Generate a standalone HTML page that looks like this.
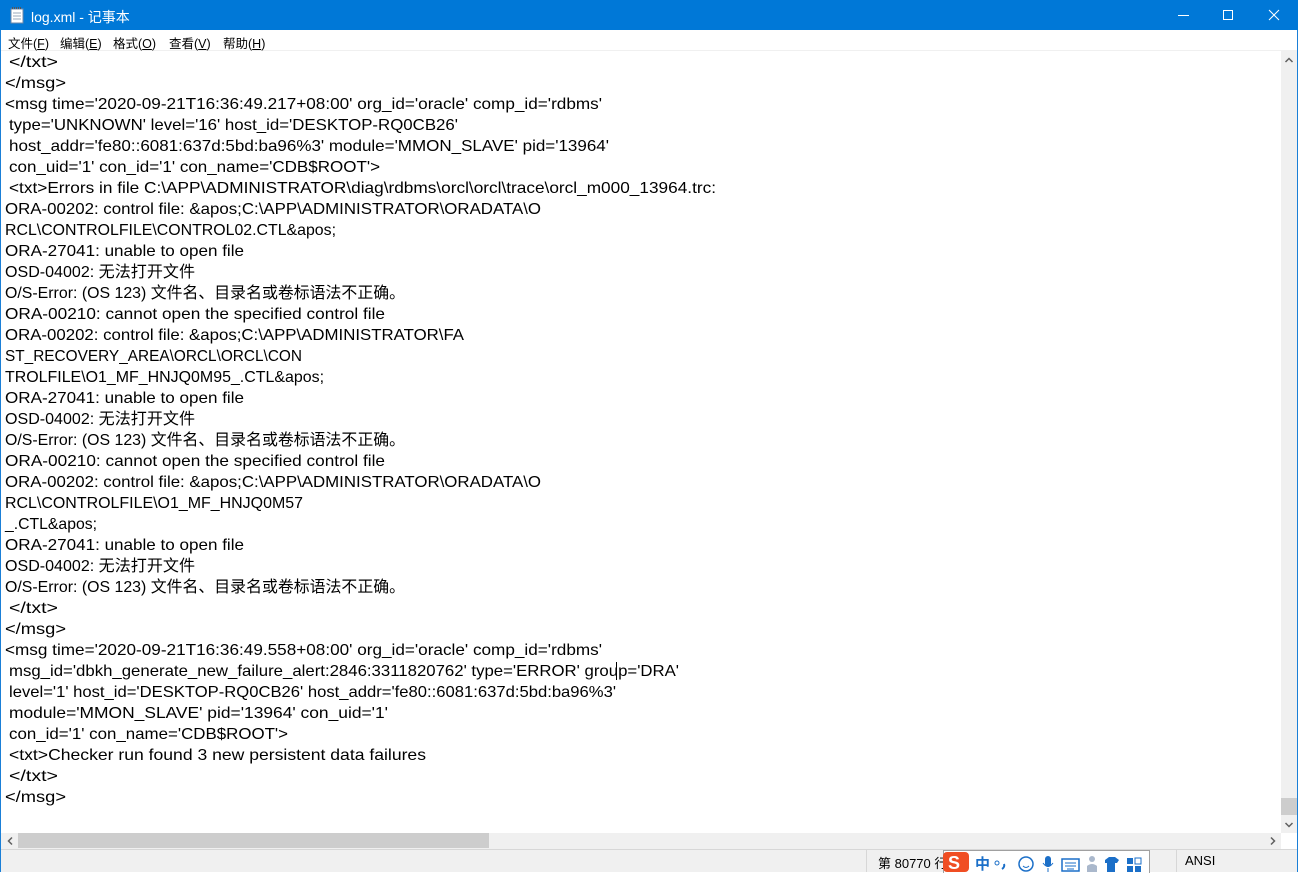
<!DOCTYPE html>
<html><head><meta charset="utf-8"><style>
body{margin:0;width:1298px;height:872px;overflow:hidden;background:#fff;font-family:"Liberation Sans","Noto Sans CJK SC",sans-serif;position:relative}
.frame{position:absolute;left:0;top:0;width:1296px;height:870px;border:1px solid #1a7fd7}
.title{position:absolute;left:0;top:0;width:1298px;height:30px;background:#0078d7;color:#fff;font-size:14px}
.menu{position:absolute;left:1px;top:30px;width:1296px;height:20px;background:#fff;font-size:12.5px;font-family:"Liberation Sans","Noto Sans CJK SC",sans-serif;border-bottom:1px solid #f0f0f0}
.menu span{position:absolute;top:3px}
.vs{position:absolute;left:1281px;top:51px;width:16px;height:782px;background:#f0f0f0}
.hs{position:absolute;left:1px;top:833px;width:1280px;height:16px;background:#f0f0f0}
.status{position:absolute;left:1px;top:849px;width:1296px;height:22px;background:#f0f0f0;border-top:1px solid #d7d7d7;font-size:13px}
</style></head><body>
<div class="frame"></div>
<div class="title">
<svg style="position:absolute;left:10px;top:7px" width="14" height="17"><rect x="1" y="2" width="12" height="14" fill="#fff" stroke="#6b87a8"/><path d="M3 6h8M3 9h8M3 12h8" stroke="#9ab"/><path d="M2 1h10" stroke="#555" stroke-width="2" stroke-dasharray="1 1"/></svg>
<span style="position:absolute;left:31px;top:7px">log.xml - 记事本</span>
<svg style="position:absolute;left:1170px;top:0" width="128" height="30"><path d="M8 15.5h11" stroke="#fff"/><rect x="53.5" y="10.5" width="9" height="9" fill="none" stroke="#fff"/><path d="M99 10l10 10M109 10l-10 10" stroke="#fff"/></svg>
</div>
<div class="menu">
<span style="left:7px">文件(<u>F</u>)</span><span style="left:59px">编辑(<u>E</u>)</span><span style="left:112px">格式(<u>O</u>)</span><span style="left:168px">查看(<u>V</u>)</span><span style="left:222px">帮助(<u>H</u>)</span>
</div>
<svg style="position:absolute;left:0;top:0" width="1280" height="833" font-size="16" font-family="Liberation Sans,Noto Sans CJK SC,sans-serif" fill="#000">
<g>
<text x="9" y="67" textLength="49" lengthAdjust="spacingAndGlyphs">&lt;/txt&gt;</text>
<text x="5" y="88" textLength="61" lengthAdjust="spacingAndGlyphs">&lt;/msg&gt;</text>
<text x="5" y="109" textLength="597" lengthAdjust="spacingAndGlyphs">&lt;msg time='2020-09-21T16:36:49.217+08:00' org_id='oracle' comp_id='rdbms'</text>
<text x="9" y="130" textLength="449" lengthAdjust="spacingAndGlyphs">type='UNKNOWN' level='16' host_id='DESKTOP-RQ0CB26'</text>
<text x="9" y="151" textLength="600" lengthAdjust="spacingAndGlyphs">host_addr='fe80::6081:637d:5bd:ba96%3' module='MMON_SLAVE' pid='13964'</text>
<text x="9" y="172" textLength="371" lengthAdjust="spacingAndGlyphs">con_uid='1' con_id='1' con_name='CDB$ROOT'&gt;</text>
<text x="9" y="193" textLength="707" lengthAdjust="spacingAndGlyphs">&lt;txt&gt;Errors in file C:\APP\ADMINISTRATOR\diag\rdbms\orcl\orcl\trace\orcl_m000_13964.trc:</text>
<text x="5" y="214" textLength="536" lengthAdjust="spacingAndGlyphs">ORA-00202: control file: &amp;apos;C:\APP\ADMINISTRATOR\ORADATA\O</text>
<text x="5" y="235" textLength="331" lengthAdjust="spacingAndGlyphs">RCL\CONTROLFILE\CONTROL02.CTL&amp;apos;</text>
<text x="5" y="256" textLength="239" lengthAdjust="spacingAndGlyphs">ORA-27041: unable to open file</text>
<text x="5" y="277" textLength="190" lengthAdjust="spacingAndGlyphs">OSD-04002: 无法打开文件</text>
<text x="5" y="298" textLength="400" lengthAdjust="spacingAndGlyphs">O/S-Error: (OS 123) 文件名、目录名或卷标语法不正确。</text>
<text x="5" y="319" textLength="380" lengthAdjust="spacingAndGlyphs">ORA-00210: cannot open the specified control file</text>
<text x="5" y="340" textLength="459" lengthAdjust="spacingAndGlyphs">ORA-00202: control file: &amp;apos;C:\APP\ADMINISTRATOR\FA</text>
<text x="5" y="361" textLength="297" lengthAdjust="spacingAndGlyphs">ST_RECOVERY_AREA\ORCL\ORCL\CON</text>
<text x="5" y="382" textLength="319" lengthAdjust="spacingAndGlyphs">TROLFILE\O1_MF_HNJQ0M95_.CTL&amp;apos;</text>
<text x="5" y="403" textLength="239" lengthAdjust="spacingAndGlyphs">ORA-27041: unable to open file</text>
<text x="5" y="424" textLength="190" lengthAdjust="spacingAndGlyphs">OSD-04002: 无法打开文件</text>
<text x="5" y="445" textLength="400" lengthAdjust="spacingAndGlyphs">O/S-Error: (OS 123) 文件名、目录名或卷标语法不正确。</text>
<text x="5" y="466" textLength="380" lengthAdjust="spacingAndGlyphs">ORA-00210: cannot open the specified control file</text>
<text x="5" y="487" textLength="536" lengthAdjust="spacingAndGlyphs">ORA-00202: control file: &amp;apos;C:\APP\ADMINISTRATOR\ORADATA\O</text>
<text x="5" y="508" textLength="298" lengthAdjust="spacingAndGlyphs">RCL\CONTROLFILE\O1_MF_HNJQ0M57</text>
<text x="5" y="529" textLength="92" lengthAdjust="spacingAndGlyphs">_.CTL&amp;apos;</text>
<text x="5" y="550" textLength="239" lengthAdjust="spacingAndGlyphs">ORA-27041: unable to open file</text>
<text x="5" y="571" textLength="190" lengthAdjust="spacingAndGlyphs">OSD-04002: 无法打开文件</text>
<text x="5" y="592" textLength="400" lengthAdjust="spacingAndGlyphs">O/S-Error: (OS 123) 文件名、目录名或卷标语法不正确。</text>
<text x="9" y="613" textLength="49" lengthAdjust="spacingAndGlyphs">&lt;/txt&gt;</text>
<text x="5" y="634" textLength="61" lengthAdjust="spacingAndGlyphs">&lt;/msg&gt;</text>
<text x="5" y="655" textLength="597" lengthAdjust="spacingAndGlyphs">&lt;msg time='2020-09-21T16:36:49.558+08:00' org_id='oracle' comp_id='rdbms'</text>
<text x="9" y="676" textLength="670" lengthAdjust="spacingAndGlyphs">msg_id='dbkh_generate_new_failure_alert:2846:3311820762' type='ERROR' group='DRA'</text>
<text x="9" y="697" textLength="607" lengthAdjust="spacingAndGlyphs">level='1' host_id='DESKTOP-RQ0CB26' host_addr='fe80::6081:637d:5bd:ba96%3'</text>
<text x="9" y="718" textLength="379" lengthAdjust="spacingAndGlyphs">module='MMON_SLAVE' pid='13964' con_uid='1'</text>
<text x="9" y="739" textLength="279" lengthAdjust="spacingAndGlyphs">con_id='1' con_name='CDB$ROOT'&gt;</text>
<text x="9" y="760" textLength="417" lengthAdjust="spacingAndGlyphs">&lt;txt&gt;Checker run found 3 new persistent data failures</text>
<text x="9" y="781" textLength="49" lengthAdjust="spacingAndGlyphs">&lt;/txt&gt;</text>
<text x="5" y="802" textLength="61" lengthAdjust="spacingAndGlyphs">&lt;/msg&gt;</text>
</g>
<rect x="616" y="662" width="1" height="18" fill="#000"/>
</svg>
<div class="vs">
<svg style="position:absolute;left:0;top:0" width="16" height="782"><path d="M4.5 11l3.5-3.5 3.5 3.5" fill="none" stroke="#606060" stroke-width="1.5"/><rect x="0" y="747" width="16" height="17" fill="#cdcdcd"/><path d="M4.5 772l3.5 3.5 3.5-3.5" fill="none" stroke="#606060" stroke-width="1.5"/></svg>
</div>
<div class="hs">
<svg style="position:absolute;left:0;top:0" width="1280" height="16"><path d="M11 4.5l-3.5 3.5 3.5 3.5" fill="none" stroke="#606060" stroke-width="1.5"/><rect x="17" y="0" width="471" height="15" fill="#cdcdcd"/><path d="M1270 4.5l3.5 3.5-3.5 3.5" fill="none" stroke="#606060" stroke-width="1.5"/></svg>
</div>
<div class="status">
<div style="position:absolute;left:865px;top:0;width:1px;height:22px;background:#d7d7d7"></div>
<div style="position:absolute;left:1175px;top:0;width:1px;height:22px;background:#d7d7d7"></div>
<span style="position:absolute;left:877px;top:3px">第 80770 行</span>
<span style="position:absolute;left:1184px;top:3px">ANSI</span>
<div style="position:absolute;left:942px;top:0;width:205px;height:22px;background:#fff;border:1px solid #a0a0a0;border-bottom:none"></div>
<svg style="position:absolute;left:940px;top:0" width="210" height="22">
<rect x="2" y="2" width="26" height="20" rx="4" fill="#f04e23"/><text x="7" y="19" font-size="18" font-weight="bold" fill="#fff" font-family="Liberation Sans">S</text>
<text x="34" y="19" font-size="15" fill="#1b6fc8" font-weight="bold" font-family="Noto Sans CJK SC">中</text>
<circle cx="56" cy="13" r="2" fill="none" stroke="#1b6fc8"/><path d="M63 14q1 3-2 5" stroke="#1b6fc8" stroke-width="2" fill="none"/>
<circle cx="85" cy="14" r="7" fill="none" stroke="#1b6fc8" stroke-width="1.5"/><path d="M82 16q3 3 6 0" stroke="#1b6fc8" fill="none"/>
<rect x="104" y="6" width="6" height="11" rx="3" fill="#1b6fc8"/><path d="M102 13q5 7 10 0M107 18v4" stroke="#1b6fc8" fill="none"/>
<rect x="121" y="9" width="17" height="12" fill="none" stroke="#1b6fc8" stroke-width="1.5"/><path d="M124 13h11M124 16h11M126 19h7" stroke="#1b6fc8"/>
<circle cx="151" cy="9" r="3" fill="#aab8cc"/><path d="M146 22v-6q5-4 10 0v6z" fill="#aab8cc"/>
<path d="M164 10l4-3h6l4 3-2 3h-2v9h-8v-9h-2z" fill="#1b6fc8"/>
<rect x="186" y="8" width="6" height="6" fill="#1b6fc8"/><rect x="194" y="8" width="6" height="6" fill="none" stroke="#1b6fc8"/><rect x="186" y="16" width="6" height="6" fill="#1b6fc8"/><rect x="194" y="16" width="6" height="6" fill="#1b6fc8"/>
</svg>
</div>
</body></html>
